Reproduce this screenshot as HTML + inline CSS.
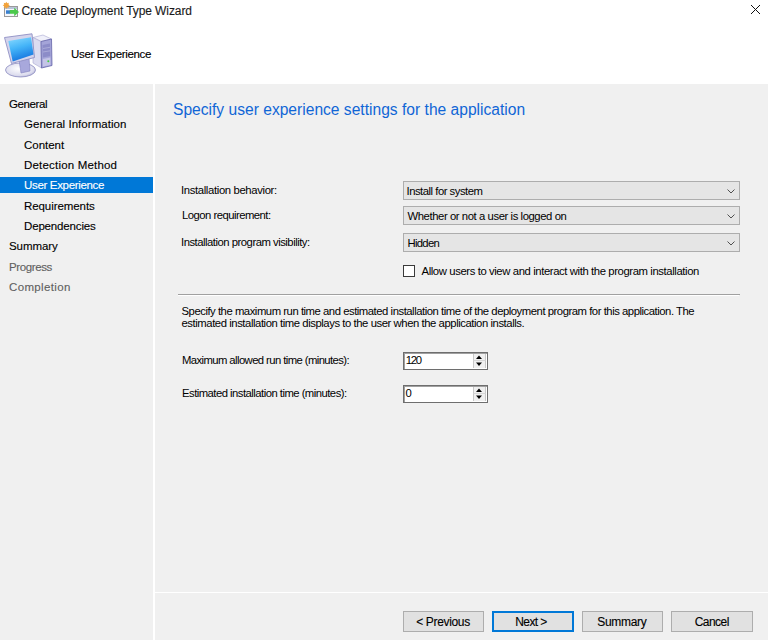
<!DOCTYPE html>
<html><head><meta charset="utf-8"><style>
html,body{margin:0;padding:0;width:768px;height:640px;overflow:hidden;background:#fff;}
body{position:relative;font-family:"Liberation Sans",sans-serif;}
.t{position:absolute;white-space:pre;font-family:"Liberation Sans",sans-serif;-webkit-text-stroke:0.12px currentColor;}
.r{position:absolute;box-sizing:border-box;}
</style></head><body>
<div class="r" style="left:0;top:84px;width:153px;height:556px;background:#f0f0f0"></div>
<div class="r" style="left:155px;top:84px;width:613px;height:556px;background:#f0f0f0"></div>
<div class="r" style="left:155px;top:592px;width:613px;height:1px;background:#fff"></div>
<div class="r" style="left:0;top:177px;width:153px;height:16px;background:#0078d7"></div>
<!-- combos -->
<div class="r" style="left:403px;top:181px;width:337px;height:19px;background:#e5e5e5;border:1px solid #adadad"></div>
<div class="r" style="left:403px;top:206px;width:337px;height:19px;background:#e5e5e5;border:1px solid #adadad"></div>
<div class="r" style="left:403px;top:233px;width:337px;height:19px;background:#e5e5e5;border:1px solid #adadad"></div>
<svg class="r" style="left:0;top:0" width="768" height="640" viewBox="0 0 768 640">
 <g fill="none" stroke="#505050" stroke-width="1">
  <path d="M727.5 189.5 L731 193 L734.5 189.5"/>
  <path d="M727.5 214.5 L731 218 L734.5 214.5"/>
  <path d="M727.5 241.5 L731 245 L734.5 241.5"/>
 </g>
 <path d="M751 5 L760 14 M760 5 L751 14" stroke="#111" stroke-width="1" fill="none"/>
</svg>
<!-- checkbox -->
<div class="r" style="left:403px;top:265px;width:12px;height:12px;background:#fff;border:1px solid #3a3a3a"></div>
<!-- separator -->
<div class="r" style="left:178px;top:294px;width:562px;height:1px;background:#a0a0a0"></div>
<div class="r" style="left:178px;top:295px;width:561px;height:1px;background:#fff"></div>
<!-- spin boxes -->
<div class="r" style="left:403px;top:352px;width:85px;height:18px;background:#fff;border:1px solid #6e6e6e;box-shadow:inset 1px 1px 0 #a0a0a0"></div>
<div class="r" style="left:403px;top:385px;width:85px;height:18px;background:#fff;border:1px solid #6e6e6e;box-shadow:inset 1px 1px 0 #a0a0a0"></div>
<div class="r" style="left:473px;top:354px;width:13px;height:7px;background:#f0f0f0;border-left:1px solid #c8c8c8;border-right:1px solid #c8c8c8;border-bottom:1px solid #d8d8d8"></div>
<div class="r" style="left:473px;top:361px;width:13px;height:7px;background:#f0f0f0;border-left:1px solid #c8c8c8;border-right:1px solid #c8c8c8"></div>
<div class="r" style="left:473px;top:387px;width:13px;height:7px;background:#f0f0f0;border-left:1px solid #c8c8c8;border-right:1px solid #c8c8c8;border-bottom:1px solid #d8d8d8"></div>
<div class="r" style="left:473px;top:394px;width:13px;height:7px;background:#f0f0f0;border-left:1px solid #c8c8c8;border-right:1px solid #c8c8c8"></div>
<svg class="r" style="left:0;top:0" width="768" height="640" viewBox="0 0 768 640">
 <g fill="#000">
  <path d="M476 359 L479 355.5 L482 359Z"/>
  <path d="M476 362.5 L479 366 L482 362.5Z"/>
  <path d="M476 392 L479 388.5 L482 392Z"/>
  <path d="M476 395.5 L479 399 L482 395.5Z"/>
 </g>
</svg>
<!-- buttons -->
<div class="r" style="left:403px;top:611px;width:81px;height:21px;background:#e1e1e1;border:1px solid #adadad"></div>
<div class="r" style="left:492px;top:611px;width:82px;height:21px;background:#e1e1e1;border:2px solid #0078d7"></div>
<div class="r" style="left:582px;top:611px;width:81px;height:21px;background:#e1e1e1;border:1px solid #adadad"></div>
<div class="r" style="left:671px;top:611px;width:82px;height:21px;background:#e1e1e1;border:1px solid #adadad"></div>
<svg class="r" style="left:0;top:0" width="60" height="84" viewBox="0 0 60 84">
 <defs>
  <linearGradient id="scr" x1="0" y1="0" x2="0.3" y2="1">
   <stop offset="0" stop-color="#8cdcff"/>
   <stop offset="0.5" stop-color="#44b4f8"/>
   <stop offset="1" stop-color="#1878e0"/>
  </linearGradient>
  <linearGradient id="twr" x1="0" y1="0" x2="1" y2="1">
   <stop offset="0" stop-color="#e6e6f6"/>
   <stop offset="1" stop-color="#a8a8d8"/>
  </linearGradient>
  <radialGradient id="base" cx="0.45" cy="0.4" r="0.7">
   <stop offset="0" stop-color="#ffffff"/>
   <stop offset="0.7" stop-color="#dcdcee"/>
   <stop offset="1" stop-color="#9c9cc8"/>
  </radialGradient>
 </defs>
 <!-- tower -->
 <path d="M33 37.5 L43 35 L51.5 39 L41 41.5 Z" fill="#f0f0fa" stroke="#a8a8d0" stroke-width="0.6"/>
 <path d="M33 37.5 L41 41.5 L41.5 68 L33 63 Z" fill="#dcdcf0" stroke="#a8a8d0" stroke-width="0.6"/>
 <path d="M41 41.5 L51.5 39 L52 65.5 L41.5 68 Z" fill="#a4a4d8" stroke="#6464a8" stroke-width="0.8"/>
 <path d="M42.5 45 L50 43.5 L50.3 56 L42.8 57.5 Z" fill="#8c8cc8"/>
 <path d="M43 48.5 L50 47.3 M43 52 L50.2 50.8" stroke="#b8b8e0" stroke-width="0.7"/>
 <path d="M42.8 59 L50.4 57.5 L50.5 65 L43 66.5 Z" fill="#c4c4e6"/>
 <circle cx="48.3" cy="61.3" r="1" fill="#40d040"/>
 <!-- base -->
 <ellipse cx="20.5" cy="70" rx="15" ry="7" fill="url(#base)" stroke="#8c8cc0" stroke-width="0.8"/>
 <!-- neck -->
 <path d="M19 60 L29 58 L30 71 L21 73 Z" fill="#a8a8dc" stroke="#8080c0" stroke-width="0.6"/>
 <!-- monitor bezel -->
 <path d="M4.5 37.5 L32 33.8 L34.5 57.5 L11.5 63.5 Z" fill="#d4d4ec" stroke="#9090c4" stroke-width="0.9"/>
 <path d="M8.3 41 L31 37.3 L33.5 54.5 L12.7 61.5 Z" fill="url(#scr)"/>
</svg>
<svg class="r" style="left:0;top:0" width="24" height="22" viewBox="0 0 24 22">
 <rect x="4.5" y="6.5" width="13" height="10" fill="#f4f6fa" stroke="#9a9a9a" stroke-width="1"/>
 <rect x="5" y="7" width="12" height="2" fill="#b8c4d8"/>
 <rect x="6" y="10.3" width="4" height="3.5" fill="#3b7fd0"/>
 <path d="M9.8 10 L14.2 10 L14.2 7.8 L19 12 L14.2 16.2 L14.2 13.8 L9.8 13.8 Z" fill="#4cc94c"/>
 <path d="M6.30 1.70 L7.18 3.18 L8.85 2.75 L8.42 4.42 L9.90 5.30 L8.42 6.18 L8.85 7.85 L7.18 7.42 L6.30 8.90 L5.42 7.42 L3.75 7.85 L4.18 6.18 L2.70 5.30 L4.18 4.42 L3.75 2.75 L5.42 3.18 Z" fill="#f2a23a"/>
</svg>

<div class="t" style="left:21.50px;top:3.84px;font-size:12px;line-height:14px;letter-spacing:-0.097px;color:#1a1a1a">Create Deployment Type Wizard</div><div class="t" style="left:71.00px;top:47.52px;font-size:11.5px;line-height:13px;letter-spacing:-0.330px;color:#000">User Experience</div><div class="t" style="left:9.00px;top:97.52px;font-size:11.5px;line-height:13px;letter-spacing:-0.393px;color:#000">General</div><div class="t" style="left:24.00px;top:117.52px;font-size:11.5px;line-height:13px;letter-spacing:0.042px;color:#000">General Information</div><div class="t" style="left:24.00px;top:138.52px;font-size:11.5px;line-height:13px;letter-spacing:-0.014px;color:#000">Content</div><div class="t" style="left:24.00px;top:158.52px;font-size:11.5px;line-height:13px;letter-spacing:0.191px;color:#000">Detection Method</div><div class="t" style="left:24.00px;top:178.52px;font-size:11.5px;line-height:13px;letter-spacing:-0.330px;color:#fff">User Experience</div><div class="t" style="left:24.00px;top:199.52px;font-size:11.5px;line-height:13px;letter-spacing:-0.076px;color:#000">Requirements</div><div class="t" style="left:24.00px;top:219.52px;font-size:11.5px;line-height:13px;letter-spacing:-0.161px;color:#000">Dependencies</div><div class="t" style="left:9.00px;top:239.52px;font-size:11.5px;line-height:13px;letter-spacing:-0.075px;color:#000">Summary</div><div class="t" style="left:9.00px;top:260.52px;font-size:11.5px;line-height:13px;letter-spacing:-0.381px;color:#606060">Progress</div><div class="t" style="left:9.00px;top:280.52px;font-size:11.5px;line-height:13px;letter-spacing:0.359px;color:#606060">Completion</div><div class="t" style="-webkit-text-stroke:0;left:173.00px;top:100.59px;font-size:15.6px;line-height:18px;letter-spacing:0.005px;color:#1066d6">Specify user experience settings for the application</div><div class="t" style="-webkit-text-stroke:0;left:181.00px;top:183.58px;font-size:11.3px;line-height:13px;letter-spacing:-0.356px;color:#000">Installation behavior:</div><div class="t" style="-webkit-text-stroke:0;left:182.00px;top:208.58px;font-size:11.3px;line-height:13px;letter-spacing:-0.520px;color:#000">Logon requirement:</div><div class="t" style="-webkit-text-stroke:0;left:181.00px;top:235.58px;font-size:11.3px;line-height:13px;letter-spacing:-0.492px;color:#000">Installation program visibility:</div><div class="t" style="-webkit-text-stroke:0;left:406.50px;top:184.58px;font-size:11.3px;line-height:13px;letter-spacing:-0.490px;color:#000">Install for system</div><div class="t" style="-webkit-text-stroke:0;left:407.50px;top:209.58px;font-size:11.3px;line-height:13px;letter-spacing:-0.425px;color:#000">Whether or not a user is logged on</div><div class="t" style="-webkit-text-stroke:0;left:407.50px;top:236.58px;font-size:11.3px;line-height:13px;letter-spacing:-0.703px;color:#000">Hidden</div><div class="t" style="-webkit-text-stroke:0;left:421.50px;top:264.58px;font-size:11.3px;line-height:13px;letter-spacing:-0.397px;color:#000">Allow users to view and interact with the program installation</div><div class="t" style="-webkit-text-stroke:0;left:181.50px;top:304.58px;font-size:11.3px;line-height:13px;letter-spacing:-0.467px;color:#000">Specify the maximum run time and estimated installation time of the deployment program for this application. The</div><div class="t" style="-webkit-text-stroke:0;left:181.50px;top:316.58px;font-size:11.3px;line-height:13px;letter-spacing:-0.439px;color:#000">estimated installation time displays to the user when the application installs.</div><div class="t" style="-webkit-text-stroke:0;left:182.00px;top:353.58px;font-size:11.3px;line-height:13px;letter-spacing:-0.590px;color:#000">Maximum allowed run time (minutes):</div><div class="t" style="-webkit-text-stroke:0;left:182.00px;top:386.58px;font-size:11.3px;line-height:13px;letter-spacing:-0.526px;color:#000">Estimated installation time (minutes):</div><div class="t" style="-webkit-text-stroke:0;left:405.70px;top:353.58px;font-size:11.3px;line-height:13px;letter-spacing:-1.283px;color:#000">120</div><div class="t" style="-webkit-text-stroke:0;left:405.50px;top:386.58px;font-size:11.3px;line-height:13px;letter-spacing:0.000px;color:#000">0</div><div class="t" style="left:416.20px;top:614.84px;font-size:12px;line-height:14px;letter-spacing:-0.337px;color:#000">&lt; Previous</div><div class="t" style="left:515.30px;top:614.84px;font-size:12px;line-height:14px;letter-spacing:-0.602px;color:#000">Next &gt;</div><div class="t" style="left:597.30px;top:614.84px;font-size:12px;line-height:14px;letter-spacing:-0.307px;color:#000">Summary</div><div class="t" style="left:694.70px;top:614.84px;font-size:12px;line-height:14px;letter-spacing:-0.537px;color:#000">Cancel</div>
</body></html>
